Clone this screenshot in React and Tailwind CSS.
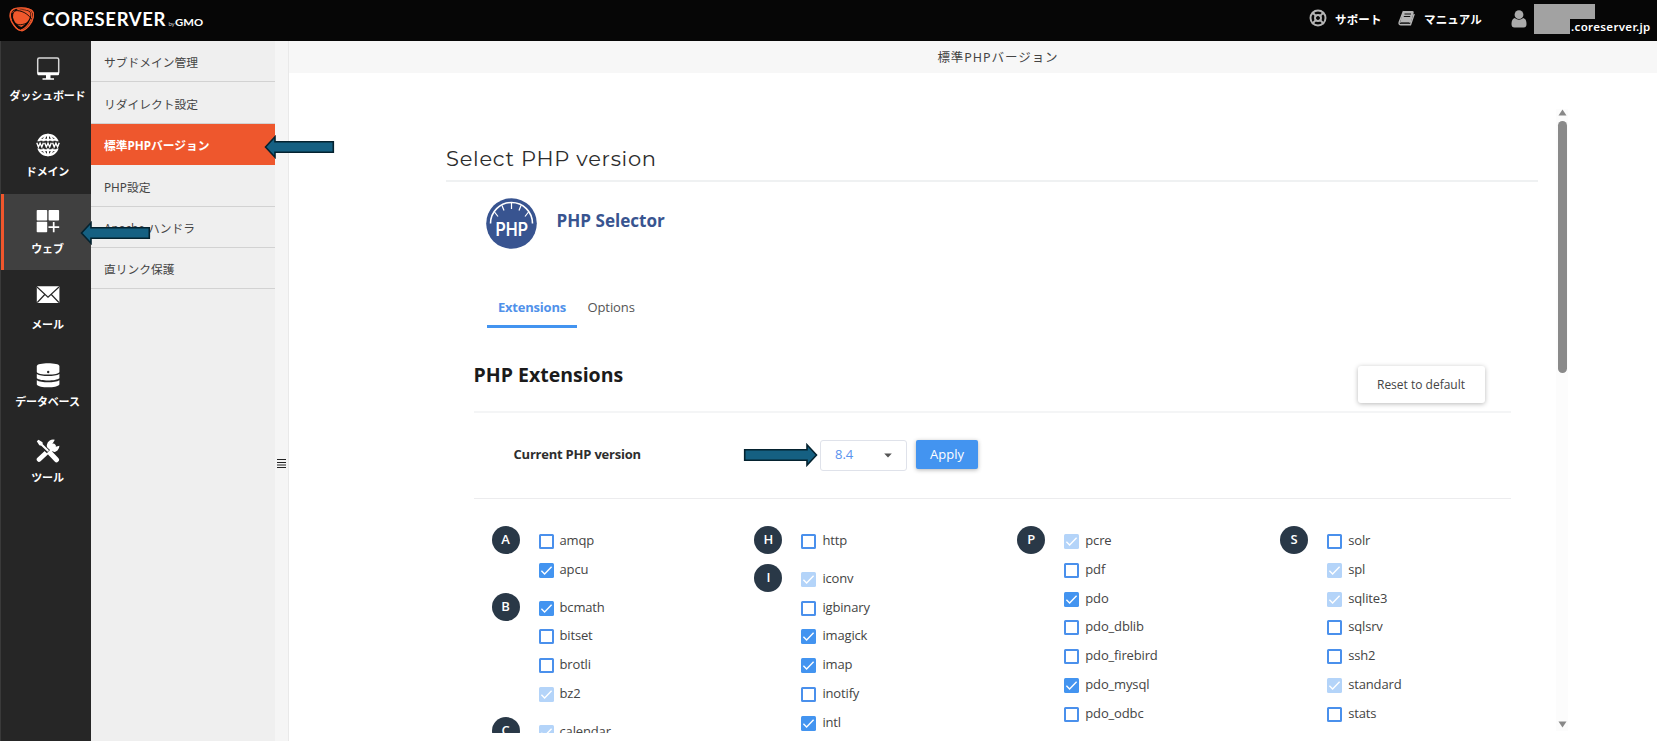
import React from "react";
import { LifeBuoy } from "lucide-react";

const jp = "font-['Noto_Sans','Noto_Sans_CJK_JP',sans-serif]";

function Arrow({ className, flip, width = 71 }) {
  const end = width - 1.7;
  return (
    <svg className={className} width={width} height="24" viewBox={`0 0 ${width} 24`}>
      <path
        transform={flip ? `translate(${width} 0) scale(-1 1)` : undefined}
        d={`M1.5 12 L11 1.8 V6.8 H${end} V17.2 H11 V22.2 Z`}
        fill="#156082"
        stroke="#04222f"
        strokeWidth="1.6"
      />
    </svg>
  );
}

function Logo() {
  return (
    <svg width="208" height="41" viewBox="0 0 208 41">
      <g fill="none" stroke="#f0582c" strokeWidth="1.1">
        <path d="M12 10 C16 7 26 7 31 10 C35 13 34 20 29 26 C25 31 20 32 16 28 C10 22 8 14 12 10Z" />
        <path d="M14 9 C21 7 32 8 33.500 13 C34 19 28 29 22 31 C16 30 10 21 10.500 14 C11 11 12 10 14 9Z" />
        <path d="M12.500 12.500 C18 8 28 8 31 12 C34 18 27 28 21 30" />
      </g>
      <path d="M13 13 C17 9.500 26 9 30 12.500 C32 16 28 23 21.500 27 C16 26 11.500 18 13 13Z" fill="#f0582c" />
      <path d="M14.500 10.500 C22 10.500 27 13 31.500 19 M12 20 C16 26 21 25.500 27 23 M12.500 17 C12.500 13 14 11 17 9" fill="none" stroke="#080808" strokeWidth="0.9" />
      <text x="42.500" y="26" textLength="123" lengthAdjust="spacing" fill="#fff" className="font-['Lato',sans-serif] text-[18.500px] font-bold">CORESERVER</text>
      <text x="168.500" y="25.800" textLength="6" fill="#ccc" className="font-['Lato',sans-serif] text-[6px]">by</text>
      <text transform="translate(175 25.800) scale(1.500 1)" x="0" y="0" textLength="18.700" lengthAdjust="spacingAndGlyphs" fill="#fff" className="font-['Lato',sans-serif] text-[8.500px] font-bold">GMO</text>
    </svg>
  );
}

const navIcons = {
  dash: (
    <>
      <rect x="1.700" y="2" width="21" height="16" rx="1.500" fill="none" stroke="#d8d8d8" strokeWidth="1.500" />
      <path d="M1.500 16.200h21.500v2q0 1-1 1h-19.500q-1 0-1-1zM10 19h4.500v3.500h-4.500zM6.500 22.300h11.500v1.500h-11.500z" fill="#fff" />
    </>
  ),
  www: (
    <>
      <g fill="none" stroke="#fff" strokeWidth="2">
        <circle cx="12" cy="12" r="10.200" />
        <ellipse cx="12" cy="12" rx="5" ry="10.200" />
        <path d="M3.500 6.800h17M3.500 17.200h17M12 2v20" />
      </g>
      <rect x="0" y="8.300" width="24" height="7.200" fill="#262626" />
      <path d="M.8 9.800l1.600 4.200 1.700-3.800 1.700 3.800 1.600-4.200M8.700 9.800l1.600 4.200 1.700-3.800 1.700 3.800 1.600-4.200M16.600 9.800l1.600 4.200 1.700-3.800 1.700 3.800 1.600-4.200" fill="none" stroke="#fff" strokeWidth="1.400" />
    </>
  ),
  web: (
    <>
      <rect x=".7" y="1" width="10.500" height="10.500" rx=".8" fill="#fff" />
      <rect x="12.600" y="1" width="10.500" height="10.500" rx=".8" fill="#fff" />
      <rect x=".7" y="12.800" width="10.500" height="10.500" rx=".8" fill="#fff" />
      <path d="M17.700 13v10.300M12.500 18.200h10.700" stroke="#fff" strokeWidth="1.700" />
    </>
  ),
  mail: (
    <>
      <rect x=".8" y="1.200" width="22.600" height="16.800" rx="1" fill="#fff" />
      <path d="M1 2 L12 12.300 L23 2 M1.300 17.500 L8.800 9.500 M22.900 17.500 L15.300 9.500" fill="none" stroke="#262626" strokeWidth="1.200" />
    </>
  ),
  db: (
    <>
      <path d="M.8 4C.8.200 23.400.200 23.400 4V10C23.400 13.400.8 13.400.8 10Z" fill="#fff" />
      <path d="M.8 12C5 14.800 19 14.800 23.400 12V16.200C20 19.200 4 19.200.8 16.200Z" fill="#fff" />
      <path d="M.8 18.200C5 21 19 21 23.400 18.200V22.500C21 26.300 3 26.300.8 22.500Z" fill="#fff" />
      <circle cx="12.200" cy="10" r="1.200" fill="#262626" />
    </>
  ),
  tool: (
    <>
      <path d="M3 20.500 L17.500 7" stroke="#fff" strokeWidth="4.600" strokeLinecap="round" />
      <path d="M18.800.8 A6.300 6.300 0 1 0 23.400 6.700 L19.700 7.800 L16.500 4.700Z" fill="#fff" />
      <path d="M2.500 3.500 L12.500 12.700" stroke="#262626" strokeWidth="4.500" />
      <path d="M.8 2.300 L2.500.8 L6.500 3.300 L6.800 5.200 L13 11.300 L11.500 12.700 L5.300 6.700 L3.300 6.200Z" fill="#fff" />
      <path d="M14.500 14.300 L20.500 20.800" stroke="#262626" strokeWidth="6.500" />
      <path d="M14.300 14.300 L20.500 20.800" stroke="#fff" strokeWidth="5" strokeLinecap="round" />
    </>
  ),
};

const nav = [
  ["dash", "ダッシュボード"],
  ["www", "ドメイン"],
  ["web", "ウェブ"],
  ["mail", "メール"],
  ["db", "データベース"],
  ["tool", "ツール"],
];

const submenu = ["サブドメイン管理", "リダイレクト設定", "標準PHPバージョン", "PHP設定", "Apache ハンドラ", "直リンク保護"];

// Item state: 0 = off, 1 = on, 2 = on and locked
const columns = [
  [
    ["A", [["amqp", 0], ["apcu", 1]]],
    ["B", [["bcmath", 1], ["bitset", 0], ["brotli", 0], ["bz2", 2]]],
    ["C", [["calendar", 2]]],
  ],
  [
    ["H", [["http", 0]]],
    ["I", [["iconv", 2], ["igbinary", 0], ["imagick", 1], ["imap", 1], ["inotify", 0], ["intl", 1]]],
  ],
  [["P", [["pcre", 2], ["pdf", 0], ["pdo", 1], ["pdo_dblib", 0], ["pdo_firebird", 0], ["pdo_mysql", 1], ["pdo_odbc", 0]]]],
  [["S", [["solr", 0], ["spl", 2], ["sqlite3", 2], ["sqlsrv", 0], ["ssh2", 0], ["standard", 2], ["stats", 0]]]],
];

const boxStyles = [
  "border-2 border-[#4a90ec] bg-white",
  "bg-[#4394f0]",
  "bg-[#b4d4f9]",
];

function Check({ state }) {
  return (
    <span className={`mt-[8px] block h-[15px] w-[15px] shrink-0 rounded-[1.5px] ${boxStyles[state]}`}>
      {state > 0 && (
        <svg width="15" height="15" viewBox="0 0 15 15">
          <path d="M2.400 7.800 L5.600 10.900 L12.600 3.800" fill="none" stroke="#fff" strokeWidth="1.400" />
        </svg>
      )}
    </span>
  );
}

function Group({ letter, items }) {
  return (
    <div className="mb-[9px] flex">
      <span className="flex h-7 w-7 shrink-0 items-center justify-center rounded-full bg-[#293847] text-[13px] font-semibold text-white">{letter}</span>
      <ul className="ml-[19px]">
        {items.map(([name, state]) => (
          <li key={name} className="flex h-[28.800px] items-start">
            <Check state={state} />
            <span className="ml-[6px] pt-[3px] text-[13px] leading-[22px] tracking-[-0.150px] text-[#444]">{name}</span>
          </li>
        ))}
      </ul>
    </div>
  );
}

function Header() {
  return (
    <header className={`flex h-[41px] shrink-0 bg-[#060606] text-white ${jp}`}>
      <Logo />
      <div className="ml-auto flex h-[37px] items-center pr-[7px] text-[11.500px] font-bold tracking-[0.150px]">
        <LifeBuoy className="-mt-[1px]" size={18} strokeWidth={2.600} color="#b5b5b5" />
        <span className="ml-[8px] w-[48px] pt-[3px] whitespace-nowrap">サポート</span>
        <svg className="-mt-[1px] ml-[15px]" width="17" height="16" viewBox="0 0 17 16">
          <path d="M5.500 1H14.500Q16.200 1 15.700 2.700L13 12Q12.600 13.300 11.200 13.300H2.500" fill="#b5b5b5" />
          <path d="M5.500 1L1.200 12.300Q.5 14.800 3 14.800H12.500L16.200 4" fill="none" stroke="#b5b5b5" strokeWidth="1.400" />
          <path d="M5.500 1L2 12.500H12Z" fill="#b5b5b5" />
          <path d="M6.500 4H13M5.800 6.500H12.200" stroke="#111" strokeWidth="1" />
          <path d="M3 12.700H11.500" stroke="#111" strokeWidth="0.800" />
        </svg>
        <span className="ml-[9px] w-[61px] pt-[3px] whitespace-nowrap">マニュアル</span>
        <svg className="ml-[26px]" width="16" height="18" viewBox="0 0 16 18">
          <circle cx="8" cy="4.700" r="4.400" fill="#aaa" />
          <path d="M3.700 8Q8 11.500 12.300 8Q15.500 9 15.500 14Q15.500 17.500 12.500 17.500H3.500Q.5 17.500.5 14Q.5 9 3.700 8Z" fill="#aaa" />
        </svg>
        <div className="mt-[1px] ml-[7px] flex h-[30px] items-start">
          <span className="block h-[30px] w-[36px] bg-[#a2a2a2]" />
          <span className="flex w-[80px] flex-col">
            <span className="block h-[15px] w-[25px] bg-[#a2a2a2]" />
            <span className="pl-[1px] text-[11.500px] leading-[15px] font-semibold tracking-[0.350px] whitespace-nowrap">.coreserver.jp</span>
          </span>
        </div>
      </div>
    </header>
  );
}

export default function App() {
  return (
    <div className="relative flex h-[741px] w-[1657px] flex-col overflow-hidden bg-white font-['Open_Sans','Noto_Sans_CJK_JP',sans-serif]">
      <Header />
      <div className="flex min-h-0 flex-1">
        <nav className={`w-[91px] shrink-0 border-l border-[#3a3a3a] bg-[#262626] ${jp}`}>
          {nav.map(([icon, label]) => {
            const active = icon === "web";
            return (
              <div key={icon} className={`flex h-[76.400px] flex-col items-center border-l-[3px] ${active ? "border-[#f0562c] bg-[#404040]" : "border-transparent"}`}>
                <svg className={`shrink-0 ${icon === "dash" || icon === "mail" ? "mt-[15px]" : "mt-[15.700px] -mb-[0.700px]"}`} width="24" height="26" viewBox="0 0 24 26">{navIcons[icon]}</svg>
                <span className="mt-[5px] text-[11px] leading-[18px] font-bold tracking-[-0.150px] whitespace-nowrap text-white">{label}</span>
              </div>
            );
          })}
        </nav>
        <aside className={`w-[184px] shrink-0 bg-[#efefef] ${jp}`}>
          {submenu.map((label, i) => (
            <div key={label} className={`flex h-[41.400px] items-center border-b pt-[4px] pl-[13px] text-[11.750px] ${i === 2 ? "border-[#ee572d] bg-[#ee572d] font-bold text-white" : "border-[#d2d2d2] text-[#444]"}`}>
              {label}
            </div>
          ))}
        </aside>
        <div className="flex w-[14px] shrink-0 flex-col items-center border-r border-[#e9e9e9] bg-[#f5f5f5] pt-[417px]">
          <svg width="9" height="10" viewBox="0 0 9 10">
            <path d="M0 1.500H9M0 4.500H9M0 7H9M0 9.500H9" stroke="#222" strokeWidth="1" />
          </svg>
        </div>
        <main className="flex min-w-0 flex-1 flex-col">
          <div className={`flex h-[32px] shrink-0 items-center justify-center bg-[#f7f7f7] pt-[2px] pl-[50px] text-[12.500px] tracking-[0.950px] text-[#444] ${jp}`}>
            標準PHPバージョン
          </div>
          <div className="flex min-h-0 flex-1">
            <div className="ml-[157px] h-[660px] w-[1092px] overflow-hidden">
              <h1 className="mt-[68px] h-[41px] border-b-2 border-[#eff1f2] pt-[1px] font-['Montserrat','Inter',sans-serif] text-[21px] leading-[33px] tracking-[0.720px] text-[#2c2c2c]">Select PHP version</h1>
              <div className="ml-[39.500px] flex h-[67px] items-end">
                <svg width="51" height="51" viewBox="0 0 51 51">
                  <circle cx="25.500" cy="25.500" r="25.300" fill="#385490" />
                  <path d="M4.500 25.500A21 21 0 0 1 46.500 25.500" fill="none" stroke="#fff" strokeWidth="1.600" />
                  <path d="M25.500 5V11M16 7.500L18 12.500M35 7.500L33 12.500M8.500 14L12 18.500M42.500 14L39 18.500" stroke="#fff" strokeWidth="1.200" />
                  <text x="9.500" y="38" textLength="32.500" lengthAdjust="spacingAndGlyphs" fill="#fff" className="font-['Inter',sans-serif] text-[19px] font-semibold">PHP</text>
                </svg>
                <h2 className="mb-[14.500px] ml-[20px] text-[17.100px] leading-[28px] font-bold text-[#385490]">PHP Selector</h2>
              </div>
              <div className="mt-[39px] ml-[41px] flex h-[40px] text-[13px]">
                <span className="flex w-[90px] justify-center border-b-[3px] border-[#4394f0] pt-[8.500px] leading-[20px] font-bold tracking-[-0.200px] text-[#5091ea]">Extensions</span>
                <span className="ml-[10.500px] pt-[8.500px] leading-[20px] tracking-[-0.100px] text-[#555]">Options</span>
              </div>
              <section className="ml-[27.500px] w-[1037px]">
                <div className="flex h-[85px] justify-between border-b-2 border-[#f4f5f6]">
                  <h2 className="pt-[33px] text-[19.500px] leading-[28px] font-bold text-[#1b1b1b]">PHP Extensions</h2>
                  <button className="mt-[38px] mr-[26px] h-[37px] w-[127px] rounded-[3px] bg-white text-[12px] text-[#444] shadow-[0_1px_5px_rgba(0,0,0,0.28)]">Reset to default</button>
                </div>
                <div className="flex h-[86px] items-start border-b border-[#ececee] pt-[27px] pl-[40px]">
                  <span className="w-[306.500px] pt-[4px] text-[13px] leading-[20px] font-bold tracking-[-0.220px] text-[#2e2e2e]">Current PHP version</span>
                  <div className="flex h-[31px] w-[87px] items-center justify-between rounded-[3px] border border-[#dfe2ea] pr-[14px] pb-[1px] pl-[14px] text-[13px] text-[#5a93ee]">
                    8.4
                    <svg width="8" height="5" viewBox="0 0 8 5"><path d="M.2.500H7.800L4 4.500Z" fill="#555" /></svg>
                  </div>
                  <button className="ml-[9px] h-[29px] w-[62px] rounded-[2px] bg-[#4394f0] text-[13px] font-medium text-white shadow-[0_1px_4px_rgba(0,0,0,0.3)]">Apply</button>
                </div>
                <div className="flex pt-[27px] pl-[18px]">
                  {columns.map((groups, i) => (
                    <div key={i} className="w-[262.900px] shrink-0">
                      {groups.map(([letter, items]) => <Group key={letter} letter={letter} items={items} />)}
                    </div>
                  ))}
                </div>
              </section>
            </div>
            <div className="mt-[36px] ml-[18px] flex h-[622px] w-[12px] flex-col items-center bg-[#fcfcfc]">
              <svg width="9" height="7" viewBox="0 0 9 7"><path d="M4.500.500L8.500 6.500H.5Z" fill="#888" /></svg>
              <span className="mt-[5px] block h-[252px] w-[9px] rounded-full bg-[#8a8a8a]" />
              <svg className="mt-auto mb-[3px]" width="9" height="7" viewBox="0 0 9 7"><path d="M.5.500H8.500L4.500 6.500Z" fill="#888" /></svg>
            </div>
          </div>
        </main>
      </div>
      <Arrow className="absolute top-[135px] left-[264px]" />
      <Arrow className="absolute top-[221px] left-[80px]" />
      <Arrow flip width={75} className="absolute top-[443px] left-[743px]" />
    </div>
  );
}
